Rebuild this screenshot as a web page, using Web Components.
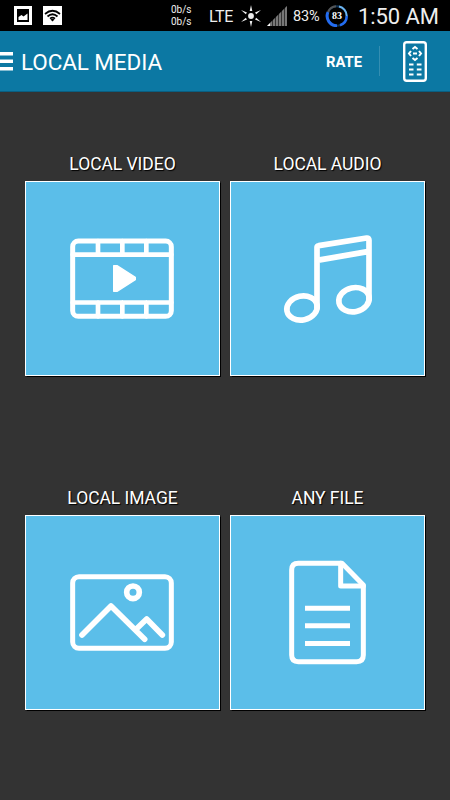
<!DOCTYPE html>
<html lang="en">
<head>
<meta charset="utf-8">
<title>Local Media</title>
<style>
  body {
    margin: 0;
    background: #333;
    font-family: Roboto, "Liberation Sans", sans-serif;
    color: #fff;
  }
</style>
</head>
<body>
<media-page></media-page>

<script>
// tile icons share one 585 unit square
const icons = {
  video: `
    <rect x="173" y="288" width="296" height="226" rx="17"/>
    <path d="M173 329H469M173 472.500H469M249 288V329M322 288V329M394 288V329M249 472V514M322 472V514M394 472V514" stroke-width="14"/>
    <path d="M296 362H306L361 397V404L306 439H296Z" fill="#fff" stroke-width="4"/>`,
  audio: `
    <g stroke-width="17">
      <path d="M276 488V307Q276 303 281 302L425 279Q432 278 432 285V463M276 346L432 319"/>
      <ellipse cx="231" cy="489" rx="46" ry="36" transform="rotate(-12 231 489)"/>
      <ellipse cx="387" cy="464" rx="46" ry="36" transform="rotate(-12 387 464)"/>
    </g>`,
  image: `
    <rect x="173" y="290" width="296" height="215" rx="19"/>
    <circle cx="354" cy="337" r="19" stroke-width="17"/>
    <path d="M201 465L288 378L389 478M364 447L395 417L442 465" stroke-width="17"/>`,
  file: `
    <path d="M351 250H220Q200 250 200 270V525Q200 545 220 545H395Q415 545 415 525V315Z"/>
    <path d="M347 250V318H415"/>
    <path d="M240 385H375M240 437.500H375M240 490.500H375" stroke-linecap="butt"/>`,
};

const attach = (element, html) => {
  const template = document.createElement("template");
  template.innerHTML = html;
  element.attachShadow({ mode: "open" }).appendChild(template.content.cloneNode(true));
};

class StatusBar extends HTMLElement {
  constructor() {
    super();
    attach(this, `
      <style>
        :host {
          display: flex;
          align-items: center;
          box-sizing: border-box;
          height: 31px;
          padding-left: 14px;
          background: #000;
          white-space: nowrap;
          color: #eee;
        }
        svg { display: block; flex: none; }
        .wifi { margin-left: 11px; }
        .rate { width: 22px; margin-left: 109px; font-size: 10px; line-height: 12px; padding-top: 1px; }
        .lte { width: 26px; margin-left: 16px; padding-top: 1px; font-size: 16px; letter-spacing: -0.4px; }
        .sun { margin-left: 6px; }
        .signal { margin-left: 6px; }
        .percent { width: 29px; margin-left: 6px; padding-top: 2px; font-size: 14.500px; letter-spacing: -0.2px; }
        .battery { margin-left: 3px; }
        .clock { margin-left: 9px; padding-top: 1px; font-size: 22px; letter-spacing: -0.1px; }
      </style>
      <svg width="18" height="19" viewBox="0 0 18 19">
        <path fill="#fff" d="M0 0H18V19H0Z"/>
        <path d="M3 3H15V16H3Z"/>
        <path fill="#fff" d="M4.500 14V11L7.500 9L9.500 10.500L13.500 7.500V14Z"/>
      </svg>
      <svg class="wifi" width="19" height="19" viewBox="0 0 19 19">
        <path fill="#fff" d="M0 0H19V19H0Z"/>
        <path fill="none" stroke="#000" stroke-width="1.700" d="M2 8Q9.500 1.500 17 8M4.500 10.500Q9.500 6 14.500 10.500M7 12.700Q9.500 10.500 12 12.700"/>
        <path d="M7.500 13.500Q9.500 12 11.500 13.500L9.500 15.500Z"/>
      </svg>
      <div class="rate">0b/s<br>0b/s</div>
      <span class="lte">LTE</span>
      <svg class="sun" width="20" height="22" viewBox="-10 -11 20 22" fill="#eee">
        <circle r="2.900"/>
        <path d="M-1.300 -5L0 -11L1.300 -5Z"/>
        <path d="M-1.300 5L0 11L1.300 5ZM4 -3.500L10 -6L5.200 -1.700ZM4 3.500L10 6L5.200 1.700ZM-4 -3.500L-10 -6L-5.200 -1.700ZM-4 3.500L-10 6L-5.200 1.700Z"/>
      </svg>
      <svg class="signal" width="20" height="20" viewBox="0 0 20 20">
        <path fill="#333" d="M0 20L20 0V20Z"/>
        <path fill="#fff" d="M0 20L3 17V20Z"/>
        <path fill="#777" d="M3 20V17L5 15V20ZM6 20V14L8 12V20ZM9 20V11L11 9V20ZM12 20V8L14 6V20ZM15 20V5L17 3V20ZM18 20V2L20 0V20Z"/>
      </svg>
      <span class="percent">83%</span>
      <svg class="battery" width="24" height="22" viewBox="-12 -11 24 22">
        <g fill="none">
          <circle r="9.700" stroke="#135" stroke-width="2"/>
          <path stroke="#6cb4ef" stroke-width="2" d="M2 -9.500A9.700 9.700 0 0 1 9.700 0"/>
          <path stroke="#236cf0" stroke-width="2.500" d="M9.700 0A9.700 9.700 0 0 1 3 9.200"/>
          <path stroke="#236cf0" stroke-width="3" d="M0 9.700A9.700 9.700 0 0 1 -9 -4"/>
          <path stroke="#555" stroke-width="2" d="M-9 -4A9.700 9.700 0 0 1 -1 -9.700"/>
        </g>
        <text y="3.300" text-anchor="middle" fill="#fff" font-family="Liberation Serif, serif" font-weight="bold" font-size="10">83</text>
      </svg>
      <span class="clock">1:50 AM</span>
    `);
  }
}

class ActionBar extends HTMLElement {
  constructor() {
    super();
    attach(this, `
      <style>
        :host {
          display: flex;
          align-items: center;
          box-sizing: border-box;
          height: 61px;
          background: #0c78a3;
          border-bottom: 1px solid #095f82;
        }
        svg { display: block; flex: none; }
        .title { width: 160px; margin-left: 8px; padding-top: 2px; font-size: 22.500px; letter-spacing: -0.1px; white-space: nowrap; }
        .action { margin-left: 145px; width: 37px; padding-top: 2px; font-size: 14.800px; font-weight: bold; }
        .divider { width: 1px; height: 30px; margin-left: 16px; background: #348eb2; }
        .remote { margin-left: 23px; }
      </style>
      <svg width="13" height="20" viewBox="0 0 13 20">
        <path fill="#fff" d="M0 1H13V4.500H0ZM0 8.500H13V12H0ZM0 16H13V19.500H0Z"/>
      </svg>
      <span class="title"><slot></slot></span>
      <span class="action"><slot name="action"></slot></span>
      <div class="divider"></div>
      <svg class="remote" width="24" height="41" viewBox="0 0 24 41" fill="none" stroke="#fff">
        <rect x="1.200" y="1.200" width="21.600" height="38.600" rx="2.500" stroke-width="2.400"/>
        <path stroke-width="2" d="M9.500 8L12 6L14.500 8M9.500 17L12 19L14.500 17M8 10L6 12.500L8 15M16 10L18 12.500L16 15M10 12.500H14"/>
        <path stroke-width="2.200" d="M6 23.500H10.500M13.800 23.500H18.500M6 28.500H10.500M13.800 28.500H18.500M6 33.500H10.500M13.800 33.500H18.500"/>
      </svg>
    `);
  }
}

class MediaTile extends HTMLElement {
  constructor() {
    super();
    attach(this, `
      <style>
        :host {
          display: flex;
          flex-direction: column;
          align-items: center;
        }
        .label { height: 20px; margin-bottom: 7px; font-size: 17.500px; line-height: 20px; letter-spacing: -0.05px; white-space: nowrap; text-shadow: 1px 1px 1px #000; }
        .tile { box-sizing: border-box; width: 195px; height: 195px; background: #5bbee9; border: 1px solid #fff; box-shadow: 0 0 1px 0.500px #000; }
        svg { display: block; margin: -1px; }
      </style>
      <span class="label"><slot></slot></span>
      <div class="tile">
        <svg width="195" height="195" fill="none" stroke="#fff" stroke-width="15" stroke-linecap="round" stroke-linejoin="round"></svg>
      </div>
    `);
  }
  connectedCallback() {
    const svg = this.shadowRoot.querySelector("svg");
    const x = this.hasAttribute("right") ? 15 : 30;
    const y = this.hasAttribute("lower") ? 105 : 108;
    svg.setAttribute("viewBox", `${x} ${y} 585 585`);
    svg.innerHTML = icons[this.getAttribute("icon")];
  }
}

class MediaPage extends HTMLElement {
  constructor() {
    super();
    attach(this, `
      <style>
        :host { display: block; height: 800px; overflow: hidden; }
        main {
          display: grid;
          grid-template-columns: 195px 195px;
          column-gap: 10px;
          row-gap: 112px;
          padding: 62px 25px 0;
        }
      </style>
      <status-bar></status-bar>
      <action-bar>LOCAL MEDIA<span slot="action">RATE</span></action-bar>
      <main>
        <media-tile icon="video">LOCAL VIDEO</media-tile>
        <media-tile icon="audio" right>LOCAL AUDIO</media-tile>
        <media-tile icon="image" lower>LOCAL IMAGE</media-tile>
        <media-tile icon="file" right lower>ANY FILE</media-tile>
      </main>
    `);
  }
}

customElements.define("status-bar", StatusBar);
customElements.define("action-bar", ActionBar);
customElements.define("media-tile", MediaTile);
customElements.define("media-page", MediaPage);
</script>
</body>
</html>
